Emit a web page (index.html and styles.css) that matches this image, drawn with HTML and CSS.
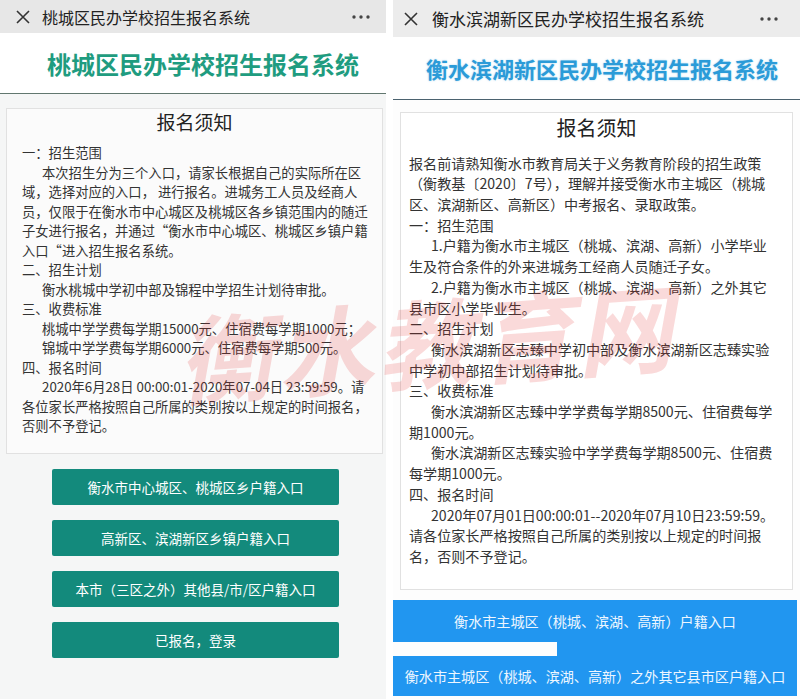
FILE: index.html
```html
<!DOCTYPE html>
<html lang="zh-CN">
<head>
    <meta charset="UTF-8">
    <meta name="viewport" content="width=device-width, initial-scale=1.0">
    <title>民办学校招生报名系统</title>
    <link rel="stylesheet" href="styles.css">
</head>
<body>
<div class="shots">
    <!-- 桃城区 -->
    <section class="phone phone-left">
        <div class="topbar">
            <svg class="close" width="14" height="14" viewBox="0 0 14 14"><path d="M1 1L13 13M13 1L1 13" stroke="#333" stroke-width="1.6" fill="none"/></svg>
            <span class="topbar-title">桃城区民办学校招生报名系统</span>
            <svg class="more" width="18" height="4" viewBox="0 0 18 4"><circle cx="2" cy="2" r="1.7" fill="#444"/><circle cx="9" cy="2" r="1.7" fill="#444"/><circle cx="16" cy="2" r="1.7" fill="#444"/></svg>
        </div>
        <h1 class="site-title green">桃城区民办学校招生报名系统</h1>
        <div class="notice">
            <h2>报名须知</h2>
            <div class="notice-body">
                <p>一：招生范围</p>
                <p class="ind">本次招生分为三个入口，请家长根据自己的实际所在区<br>域，选择对应的入口， 进行报名。进城务工人员及经商人<br>员，仅限于在衡水市中心城区及桃城区各乡镇范围内的随迁<br>子女进行报名，并通过“衡水市中心城区、桃城区乡镇户籍<br>入口“进入招生报名系统。</p>
                <p>二、招生计划</p>
                <p class="ind">衡水桃城中学初中部及锦程中学招生计划待审批。</p>
                <p>三、收费标准</p>
                <p class="ind">桃城中学学费每学期15000元、住宿费每学期1000元；</p>
                <p class="ind">锦城中学学费每学期6000元、住宿费每学期500元。</p>
                <p>四、报名时间</p>
                <p class="ind">2020年6月28日 00:00:01-2020年07-04日 23:59:59。请<br>各位家长严格按照自己所属的类别按以上规定的时间报名，<br>否则不予登记。</p>
            </div>
        </div>
        <div class="entries">
            <a class="entry" href="#">衡水市中心城区、桃城区乡户籍入口</a>
            <a class="entry" href="#">高新区、滨湖新区乡镇户籍入口</a>
            <a class="entry" href="#">本市（三区之外）其他县/市/区户籍入口</a>
            <a class="entry" href="#">已报名，登录</a>
        </div>
    </section>

    <!-- 滨湖新区 -->
    <section class="phone phone-right">
        <div class="topbar">
            <svg class="close" width="14" height="14" viewBox="0 0 14 14"><path d="M1 1L13 13M13 1L1 13" stroke="#333" stroke-width="1.6" fill="none"/></svg>
            <span class="topbar-title">衡水滨湖新区民办学校招生报名系统</span>
            <svg class="more" width="18" height="4" viewBox="0 0 18 4"><circle cx="2" cy="2" r="1.7" fill="#444"/><circle cx="9" cy="2" r="1.7" fill="#444"/><circle cx="16" cy="2" r="1.7" fill="#444"/></svg>
        </div>
        <h1 class="site-title blue">衡水滨湖新区民办学校招生报名系统</h1>
        <div class="notice">
            <h2>报名须知</h2>
            <div class="notice-body">
                <p>报名前请熟知衡水市教育局关于义务教育阶段的招生政策<br>（衡教基〔2020〕7号），理解并接受衡水市主城区（桃城<br>区、滨湖新区、高新区）中考报名、录取政策。</p>
                <p>一：招生范围</p>
                <p class="ind">1.户籍为衡水市主城区（桃城、滨湖、高新）小学毕业<br>生及符合条件的外来进城务工经商人员随迁子女。</p>
                <p class="ind">2.户籍为衡水市主城区（桃城、滨湖、高新）之外其它<br>县市区小学毕业生。</p>
                <p>二、招生计划</p>
                <p class="ind">衡水滨湖新区志臻中学初中部及衡水滨湖新区志臻实验<br>中学初中部招生计划待审批。</p>
                <p>三、收费标准</p>
                <p class="ind">衡水滨湖新区志臻中学学费每学期8500元、住宿费每学<br>期1000元。</p>
                <p class="ind">衡水滨湖新区志臻实验中学学费每学期8500元、住宿费<br>每学期1000元。</p>
                <p>四、报名时间</p>
                <p class="ind">2020年07月01日00:00:01--2020年07月10日23:59:59。<br>请各位家长严格按照自己所属的类别按以上规定的时间报<br>名，否则不予登记。</p>
            </div>
        </div>
        <div class="gates">
            <a class="gate" href="#">衡水市主城区（桃城、滨湖、高新）户籍入口</a>
            <div class="gate-gap"></div>
            <a class="gate gate-last" href="#">衡水市主城区（桃城、滨湖、高新）之外其它县市区户籍入口</a>
        </div>
    </section>

    <div class="watermark">衡水教育网</div>
</div>
</body>
</html>
```

FILE: styles.css
```css
* {
    box-sizing: border-box;
}
body {
    margin: 0;
    background: #fff;
    color: #333;
    font-family: "Noto Sans CJK SC", "Noto Sans", sans-serif;
}
.shots {
    position: relative;
    display: flex;
    gap: 7px;
    height: 699px;
    overflow: hidden;
}
.phone {
    flex: none;
}
.phone-left {
    width: 386px;
    background: #f5f6f6;
}
.phone-right {
    width: 407px;
    background: #fdfdfd;
}

/* top bar */
.topbar {
    display: flex;
    align-items: center;
    height: 33px;
    padding: 0 16px;
    background: #e7e7e7;
}
.phone-right .topbar {
    height: 37px;
    padding: 0 22px 0 11px;
    background: #ececec;
}
.topbar-title {
    margin-left: 12px;
    font-size: 16px;
    color: #222;
    white-space: nowrap;
}
.phone-right .topbar-title {
    margin-left: 14px;
    font-size: 17px;
}
.more {
    margin-left: auto;
}

/* header */
.site-title {
    display: flex;
    align-items: center;
    justify-content: center;
    height: 61px;
    margin: 0;
    padding-left: 20px;
    background: #fff;
    font-size: 24px;
    font-weight: 700;
    white-space: nowrap;
    border-bottom: 1.5px solid #61776f;
}
.green {
    color: #1f9c80;
}
.blue {
    height: 63px;
    padding-left: 11px;
    font-size: 22px;
    color: #2b9bd8;
    text-shadow: 0 0 2px rgba(43, 155, 216, 0.4);
    border-bottom-color: #4b626f;
}

/* notice card */
.notice {
    margin: 14px 3px 0 6px;
    padding-bottom: 17px;
    background: #fbfbfb;
    border: 1px solid #e1e1e1;
}
.notice h2 {
    margin: 0;
    font-size: 19px;
    font-weight: 400;
    line-height: 26px;
    text-align: center;
    color: #222;
}
.notice-body {
    padding: 8px 0 0 15px;
    font-size: 13.3px;
    line-height: 19.5px;
}
.notice-body p {
    margin: 0;
    white-space: nowrap;
}
.notice-body .ind {
    text-indent: 20px;
}
.phone-right .notice {
    margin: 12px 7px 0 7px;
    padding-bottom: 22px;
    background: #fff;
}
.phone-right .notice h2 {
    padding-top: 2px;
    font-size: 20px;
}
.phone-right .notice-body {
    padding: 11.6px 0 0 8px;
    font-size: 14.1px;
    line-height: 20.7px;
}
.phone-right .notice-body .ind {
    text-indent: 22px;
}

/* left buttons */
.entries {
    display: flex;
    flex-direction: column;
    gap: 15px;
    padding: 15.5px 0 0 52px;
}
.entry {
    display: flex;
    align-items: center;
    justify-content: center;
    width: 287px;
    height: 36px;
    background: #138a7c;
    color: #fff;
    font-size: 13.5px;
    text-decoration: none;
    border-radius: 2px;
}

/* right buttons */
.gates {
    width: 404px;
    margin-top: 10px;
    background: #2196f0;
}
.gate {
    display: flex;
    align-items: center;
    justify-content: center;
    height: 42px;
    color: #eef6ff;
    font-size: 14.1px;
    text-decoration: none;
    white-space: nowrap;
}
.gate-last {
    height: 40px;
}
.gate-gap {
    width: 164px;
    height: 14px;
    background: #fdfdfd;
}

.watermark {
    position: absolute;
    left: 176px;
    top: 292px;
    font-size: 96px;
    font-weight: 700;
    font-style: italic;
    line-height: 1;
    letter-spacing: 4px;
    color: rgba(226, 50, 50, 0.18);
    white-space: nowrap;
    transform: rotate(-4deg);
    pointer-events: none;
}
```
